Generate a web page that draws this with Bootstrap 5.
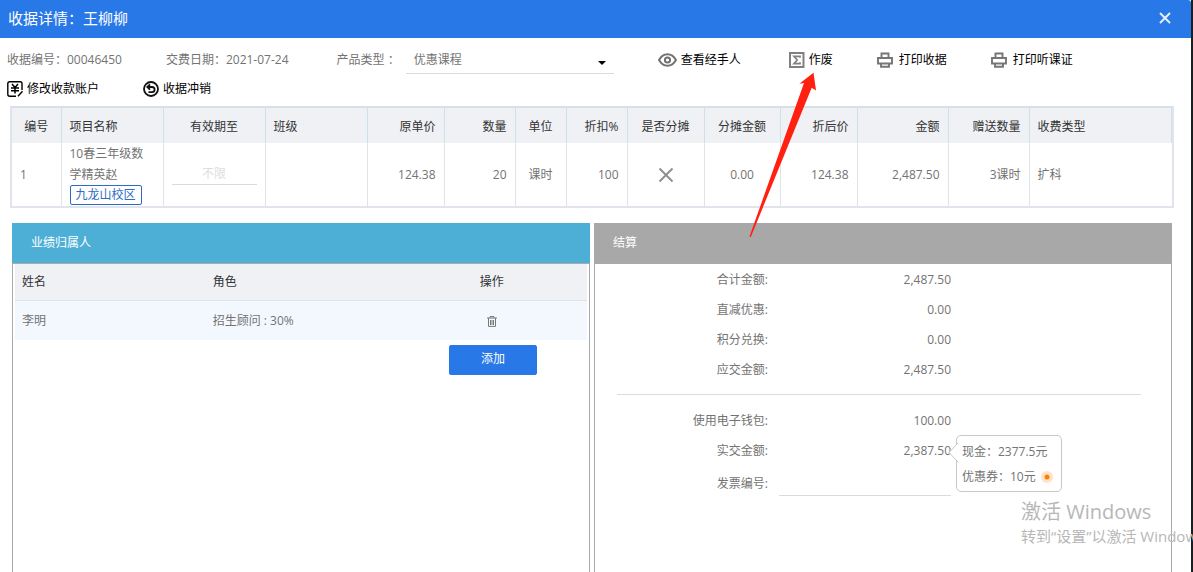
<!DOCTYPE html>
<html lang="zh-CN">
<head>
<meta charset="utf-8">
<meta name="viewport" content="width=device-width, initial-scale=1">
<title>收据详情</title>
<link rel="stylesheet" href="https://cdn.jsdelivr.net/npm/bootstrap@5.3.0/dist/css/bootstrap.min.css">
<style>
body{font-family:"Open Sans","Noto Sans CJK SC",sans-serif;font-size:12px;line-height:20px;color:#737373;background:#1b1d21}
.dialog{margin-right:2px;background:#fff}
.dialog-head{height:38px;padding:0 19px 2px 8px;background:#2878e8;color:#fff;font-size:15px;border-top-right-radius:3px}
.dialog-title{font-size:15px;font-weight:400;line-height:20px}
.plain-btn{padding:0;border:0;background:none;font-size:12px;line-height:20px;color:#000}
.tools{padding:8px 0 0 7px;gap:1px 44px}
.tools>*{height:28px}
.tools .plain-btn{gap:4px}
.tools .plain-btn.print-btn{gap:6px}
.line-field{border:0;border-bottom:1px solid #d8dae4;border-radius:0;background-color:transparent;padding:0;font-size:12px;line-height:20px;color:#737373;box-shadow:none}
.type-select{width:208px;height:28px;margin-left:6px;padding:0 8px;background-image:url("data:image/svg+xml,%3Csvg xmlns='http://www.w3.org/2000/svg' viewBox='0 0 8 4'%3E%3Cpath d='M0 0h8L4 4z'/%3E%3C/svg%3E");background-size:8px 4px;background-position:right 8px center;background-position-y:15px}
.items-wrap{margin:3px 17px 0 10px;border:2px solid #e1e4ea;border-top-color:#d7e0e8}
.items{table-layout:fixed;width:100%;color:#737373}
.items th{height:35px;padding:2px 8px 0;font-weight:400;color:#333;background:#eff1f5;border-right:1px solid #cfe2e9}
.items td{height:62px;padding:0 8px;border-right:1px solid #e2e3e8}
.items td:last-child{border-right:0}
.items th,.items td{white-space:nowrap}
.items .item-name{white-space:normal;line-height:21px}
.campus{display:inline-block;height:20px;padding:0 5px;border:1px solid #2e6bc4;border-radius:2px;color:#2e6bc4;line-height:18px;vertical-align:top}
.limit::placeholder{color:#dedede;opacity:1}
.panels{margin:15px 19px 0 12px;gap:4px}
.panel{flex:1 1 0;min-width:0;border:1px solid #aaa;border-top:0;border-bottom:0}
.panel-head{height:41px;margin:0 -1px;padding:0 19px;color:#fff;font-size:12px;font-weight:400;background:#4dafd6;border-bottom:1px solid #aaa}
.panel-head.gray{background:#a8a8a8}
.owners{table-layout:fixed;width:calc(100% - 4px);margin:0 2px}
.owners th{height:36px;padding:0 7px;font-weight:400;color:#333;background:#f0f1f5;border-bottom:1px solid #e2e3ea}
.owners td{height:40px;padding:2px 7px 0;background:#f3f8ff}
.add-row{padding:5px 52px 0}
.add-btn{width:88px;height:30px;padding:0 0 2px;border-radius:2px;font-size:12px;line-height:20px;background:#2878e8;border-color:#2878e8}
.sums{padding-top:1px}
.sum-row{height:30px}
.sum-label{width:173px;text-align:right}
.sum-value{width:183px;text-align:right}
.rule{margin:9px 30px 11px 22px;border-top:1px solid #dcdcdc;opacity:1}
.invoice{width:172px;height:28px;margin-left:11px}
.invoice-row{height:30px;margin-top:1px}
.invoice-row .sum-label{padding-top:4px}
.pay-tip{left:361px;top:-1px;width:106px;height:57px;padding:3px 5px;border:1px solid #c8c8c8;border-radius:5px;background:#fff;white-space:nowrap}
.pay-tip .beak{left:-9px;top:6px}
.pay-tip div{height:25px;line-height:25px}
.watermark{right:0;top:499px;width:172px;overflow:hidden;white-space:nowrap;color:#b7b7b7;pointer-events:none}
.watermark .big-line{font-size:20px;line-height:25px}
.watermark .small-line{font-size:15px;line-height:24px}
.pointer{left:748px;top:72px;pointer-events:none}
svg{display:block;flex:none}
</style>
</head>
<body>
<div class="dialog d-flex flex-column min-vh-100">
  <header class="dialog-head d-flex align-items-center justify-content-between">
    <h1 class="dialog-title m-0">收据详情：王柳柳</h1>
    <button type="button" class="plain-btn" aria-label="关闭">
      <svg width="14" height="14" viewBox="0 0 14 14" fill="none" stroke="#e4eefc" stroke-width="2"><path d="M2 2l10 10M12 2L2 12"/></svg>
    </button>
  </header>

  <div class="tools d-flex flex-wrap align-items-center">
    <div class="d-flex align-items-center">收据编号：00046450</div>
    <div class="d-flex align-items-center me-1">交费日期：2021-07-24</div>
    <div class="d-flex align-items-center"><label for="ptype">产品类型&nbsp;：</label>
      <select id="ptype" class="form-select line-field type-select"><option>优惠课程</option></select></div>
    <button type="button" class="plain-btn d-flex align-items-center me-1">
      <svg width="19" height="14" viewBox="0 0 19 14" fill="none" stroke="#707070" stroke-width="2"><path d="M1 7C3.2 3.2 6 1.300 9.500 1.300S15.800 3.200 18 7c-2.200 3.800-5 5.700-8.500 5.700S3.200 10.800 1 7z"/><circle cx="9.500" cy="7" r="2.600"/></svg>查看经手人</button>
    <button type="button" class="plain-btn d-flex align-items-center">
      <svg width="16" height="16" viewBox="0 0 16 16" fill="none" stroke="#808080"><path stroke-width="2" d="M1 1h13.500v14H1z"/><path stroke-width="1.700" d="M11 5.800V4.300H5L8.200 8 5 11.700h6v-1.500"/></svg>作废</button>
    <button type="button" class="plain-btn print-btn d-flex align-items-center">
      <svg width="16" height="16" viewBox="0 0 16 16" fill="none" stroke="#757575" stroke-width="1.900"><path d="M4.500 5.500V1.500h7v4M3.500 11.500H1V6h14v5.500h-2.500M4 11.500h8v3.200H4z"/></svg>打印收据</button>
    <button type="button" class="plain-btn print-btn d-flex align-items-center">
      <svg width="16" height="16" viewBox="0 0 16 16" fill="none" stroke="#757575" stroke-width="1.900"><path d="M4.500 5.500V1.500h7v4M3.500 11.500H1V6h14v5.500h-2.500M4 11.500h8v3.200H4z"/></svg>打印听课证</button>
    <button type="button" class="plain-btn d-flex align-items-center">
      <svg width="16" height="16" viewBox="0 0 16 16" fill="none" stroke="#000"><path stroke-width="1.400" d="M15 9V2.500Q15 .8 13.300.8H2.700Q.8.800.8 2.700v10.600Q.8 15.200 2.700 15.200H9M11 15.200l4.500-5"/><path stroke-width="1.500" d="M5 3l3 3.500L11 3M4 7h8M4 9.700h8M8 6.500v6"/></svg>修改收款账户</button>
    <button type="button" class="plain-btn d-flex align-items-center">
      <svg width="16" height="16" viewBox="0 0 16 16" fill="none" stroke="#111" stroke-width="1.800"><circle cx="8" cy="8" r="7"/><path d="M4.500 6H9a2.600 2.600 0 0 1 0 5.200H5.500M7 3.300L4.300 6 7 8.700"/></svg>收据冲销</button>
  </div>

  <div class="items-wrap">
    <table class="items">
      <colgroup><col style="width:49px"><col style="width:102px"><col style="width:102px"><col style="width:102px"><col style="width:77px"><col style="width:71px"><col style="width:51px"><col style="width:61px"><col style="width:77px"><col style="width:76px"><col style="width:77px"><col style="width:91px"><col style="width:81px"><col></colgroup>
      <thead><tr>
        <th class="text-center">编号</th><th>项目名称</th><th class="text-center">有效期至</th><th>班级</th><th class="text-end">原单价</th><th class="text-end">数量</th><th class="text-center">单位</th><th class="text-end">折扣%</th><th class="text-center">是否分摊</th><th class="text-center">分摊金额</th><th class="text-end">折后价</th><th class="text-end">金额</th><th class="text-end">赠送数量</th><th>收费类型</th>
      </tr></thead>
      <tbody><tr>
        <td>1</td>
        <td class="item-name">10春三年级数学精英赵<br><span class="campus">九龙山校区</span></td>
        <td><input type="text" class="form-control line-field limit text-center" placeholder="不限" aria-label="有效期至"></td>
        <td></td><td class="text-end">124.38</td><td class="text-end">20</td><td class="text-center">课时</td><td class="text-end">100</td>
        <td><svg class="mx-auto" width="16" height="16" viewBox="0 0 16 16" fill="none" stroke="#8c8c8c" stroke-width="1.800"><path d="M1.500 1.500l13 13M14.500 1.500l-13 13"/></svg></td>
        <td class="text-center">0.00</td><td class="text-end">124.38</td><td class="text-end">2,487.50</td><td class="text-end">3课时</td><td>扩科</td>
      </tr></tbody>
    </table>
  </div>

  <div class="panels d-flex flex-grow-1">
    <section class="panel">
      <h2 class="panel-head d-flex align-items-center mb-0">业绩归属人</h2>
      <table class="owners">
        <thead><tr><th>姓名</th><th>角色</th><th class="text-center">操作</th></tr></thead>
        <tbody><tr><td>李明</td><td>招生顾问 : 30%</td>
          <td><button type="button" class="plain-btn d-block mx-auto" aria-label="删除"><svg width="10" height="11" viewBox="0 0 10 11" fill="none" stroke="#777"><path d="M0 2h10M3 1.700V.6h4v1.100M1.500 2v8.400h7V2M3.500 4v5M5 4v5M6.500 4v5"/></svg></button></td></tr></tbody>
      </table>
      <div class="add-row text-end"><button type="button" class="btn btn-primary add-btn">添加</button></div>
    </section>

    <section class="panel">
      <h2 class="panel-head gray d-flex align-items-center mb-0">结算</h2>
      <div class="sums">
        <div class="sum-row d-flex align-items-center"><span class="sum-label">合计金额:</span><span class="sum-value">2,487.50</span></div>
        <div class="sum-row d-flex align-items-center"><span class="sum-label">直减优惠:</span><span class="sum-value">0.00</span></div>
        <div class="sum-row d-flex align-items-center"><span class="sum-label">积分兑换:</span><span class="sum-value">0.00</span></div>
        <div class="sum-row d-flex align-items-center"><span class="sum-label">应交金额:</span><span class="sum-value">2,487.50</span></div>
        <hr class="rule">
        <div class="sum-row d-flex align-items-center"><span class="sum-label">使用电子钱包:</span><span class="sum-value">100.00</span></div>
        <div class="sum-row d-flex align-items-center position-relative"><span class="sum-label">实交金额:</span><span class="sum-value">2,387.50</span>
          <div class="pay-tip position-absolute">
            <svg class="beak position-absolute" width="10" height="22" viewBox="0 0 10 22"><path d="M10 1L1 10.500 10 20" fill="#fff" stroke="#c8c8c8"/></svg>
            <div>现金：2377.5元</div>
            <div class="d-flex align-items-center">优惠券：10元<svg class="ms-1" width="14" height="14" viewBox="0 0 14 14"><circle cx="7" cy="7" r="6" fill="#ffe3c8"/><circle cx="7" cy="7" r="2.500" fill="#ff8000"/></svg></div>
          </div>
        </div>
        <div class="invoice-row d-flex align-items-center"><label class="sum-label" for="invoice">发票编号:</label><input id="invoice" type="text" class="form-control line-field invoice"></div>
      </div>
    </section>
  </div>
</div>

<svg class="pointer position-absolute" width="70" height="168" viewBox="0 0 70 168"><path d="M65.500 .7L68 18.500 63.700 15.800 3 164.500Q2 165.500 1.500 164.500L56 11 51.300 11.800z" fill="#ff2012"/></svg>
<div class="watermark position-absolute">
  <div class="big-line">激活 Windows</div>
  <div class="small-line">转到“设置”以激活 Windows</div>
</div>
</body>
</html>
